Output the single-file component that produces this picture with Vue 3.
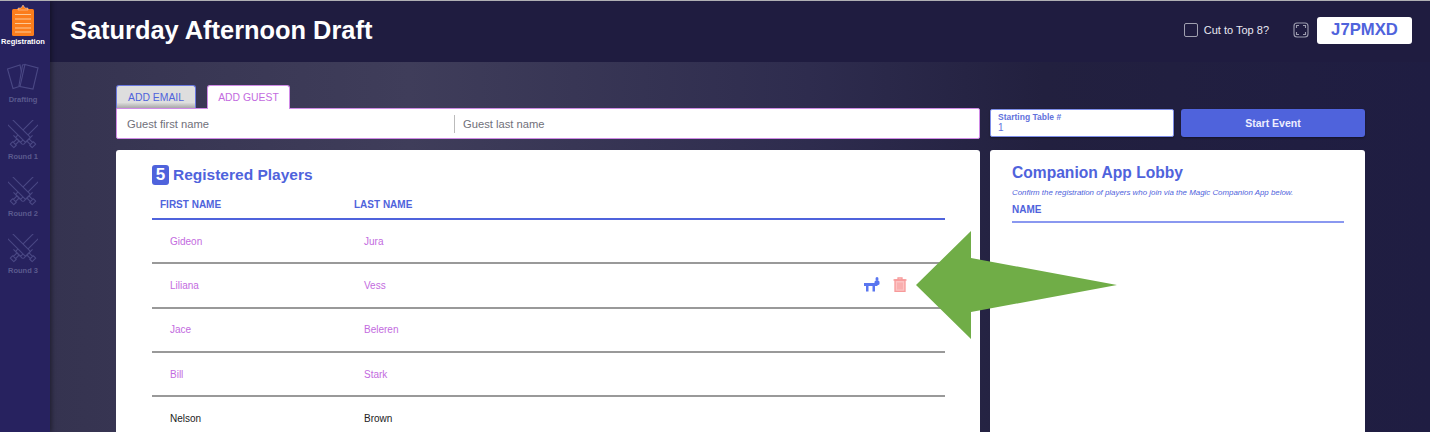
<script setup>
const rounds = ['Round 1', 'Round 2', 'Round 3']
const players = [
  { first: 'Gideon', last: 'Jura', guest: true },
  { first: 'Liliana', last: 'Vess', guest: true, actions: true },
  { first: 'Jace', last: 'Beleren', guest: true },
  { first: 'Bill', last: 'Stark', guest: true },
  { first: 'Nelson', last: 'Brown', guest: false }
]
</script>

<template>
  <div class="app">
    <nav class="rail">
      <div class="rail-item active">
        <svg class="clip" width="26" height="32" viewBox="0 0 26 32">
          <rect x="2" y="5" width="22" height="27" rx="1.500" fill="#fb7d1c" />
          <path d="M8 6V4h3l2-3 2 3h3v2z" fill="#fb7d1c" stroke="#fff" stroke-width=".4" />
          <path d="M5 10.500h16M5 15h16M5 19.500h16M5 24h16M5 28h16" stroke="#fdc996" stroke-width="1.200" />
        </svg>
        <span>Registration</span>
      </div>
      <div class="rail-item drafting">
        <svg width="32" height="30" viewBox="0 0 32 30" fill="#27225f" stroke="#4a4884" stroke-width="1.100">
          <path d="M.5 6L13 2l4 20-11 3.500z" />
          <path d="M15.500 2L18 1.500 14 23l-2-.5z" />
          <path d="M18 1.500L31 5l-5 21-13-2.500z" />
        </svg>
        <span>Drafting</span>
      </div>
      <div v-for="r in rounds" :key="r" class="rail-item round">
        <svg width="30" height="29" viewBox="-15 -15 30 29" fill="none" stroke="#4a4884" stroke-width="1.100" stroke-linejoin="round">
          <g transform="rotate(45) translate(0 -2)">
            <path d="M-3.500-18l1.500-1.500h3.500l2 1.500V9h-7z" />
            <path d="M-6.500 9h13M-1.500 9v5M1.500 9v5M-2.500 14h5v3.500h-5z" />
          </g>
          <g transform="rotate(-45) translate(0 -2)">
            <path d="M-3.500-18l1.500-1.500h3.500l2 1.500V9h-7z" fill="#27225f" />
            <path d="M-6.500 9h13M-1.500 9v5M1.500 9v5M-2.500 14h5v3.500h-5z" />
          </g>
        </svg>
        <span>{{ r }}</span>
      </div>
    </nav>

    <div class="page">
      <header class="top">
        <h1>Saturday Afternoon Draft</h1>
        <div class="top-tools">
          <label class="cut"><i class="check"></i><span>Cut to Top 8?</span></label>
          <svg class="full" width="16" height="16" viewBox="0 0 16 16" fill="none" stroke="#9c9cae" stroke-width="1.100">
            <rect x="1" y="1" width="14" height="14" rx="3" />
            <path d="M3.500 6V3.500H6M10 3.500h2.500V6M12.500 10v2.500H10M6 12.500H3.500V10" />
          </svg>
          <div class="code">J7PMXD</div>
        </div>
      </header>

      <main class="main">
        <div class="left">
          <div class="tabs">
            <div class="tab off">ADD EMAIL</div>
            <div class="tab on">ADD GUEST</div>
          </div>
          <div class="guest">
            <div class="field">Guest first name</div>
            <div class="field second">Guest last name</div>
          </div>
          <section class="card players">
            <h2><b class="count">5</b>Registered Players</h2>
            <div class="thead">
              <span>FIRST NAME</span>
              <span>LAST NAME</span>
            </div>
            <div v-for="p in players" :key="p.first" class="row" :class="{ guestrow: p.guest }">
              <span>{{ p.first }}</span>
              <span>{{ p.last }}</span>
              <div v-if="p.actions" class="actions">
                <svg width="16" height="15" viewBox="0 0 16 15" fill="#5a76f0">
                  <path d="M0 6h13.500v3H11v5.500H8.500V9h-4v5.500H2V9H0z" />
                  <ellipse cx="13" cy="2" rx="1.500" ry="2" />
                  <rect x="10.500" y="3.500" width="5" height="4.500" rx="1.500" />
                </svg>
                <svg width="14" height="15" viewBox="0 0 14 15">
                  <path d="M2 3h10v11.500H2z" fill="#fcc4c4" stroke="#f79a9a" stroke-width="1.300" />
                  <path d="M.5 3h13M5 3V1h4v2" fill="none" stroke="#f79a9a" stroke-width="1.300" />
                  <path d="M5 5.500v7M7 5.500v7M9 5.500v7" stroke="#f79a9a" stroke-width="1" />
                </svg>
              </div>
            </div>
          </section>
        </div>

        <div class="right">
          <div class="controls">
            <div class="table-no">
              <small>Starting Table #</small>
              <span>1</span>
            </div>
            <button class="start">Start Event</button>
          </div>
          <section class="card lobby">
            <h2>Companion App Lobby</h2>
            <p>Confirm the registration of players who join via the Magic Companion App below.</p>
            <div class="name">NAME</div>
          </section>
        </div>
      </main>
    </div>

    <svg class="arrow" width="202" height="109" viewBox="0 0 202 109">
      <path d="M0 54L55 0v27l146 27-146 27v27z" fill="#70ad47" />
    </svg>
  </div>
</template>

<style>
html, body { margin: 0; background: #1f1c40; }
</style>

<style scoped>
.app {
  position: relative;
  display: flex;
  width: 1430px;
  height: 432px;
  overflow: hidden;
  font-family: "Liberation Sans", Arial, sans-serif;
  border-top: 1px solid #b0b0b4;
  box-sizing: border-box;
}
.rail {
  flex: 0 0 50px;
  background: #27225f;
  box-shadow: 2px 0 4px rgba(0, 0, 0, .35);
  z-index: 1;
  display: flex;
  flex-direction: column;
  align-items: center;
  padding: 3px 4px 0 0;
  box-sizing: border-box;
}
.rail-item {
  display: flex;
  flex-direction: column;
  align-items: center;
  font-size: 7.500px;
  font-weight: 700;
  color: #5b5a8e;
  white-space: nowrap;
  line-height: 9px;
}
.rail-item.active { color: #fff; height: 59px; }
.clip { margin-bottom: 1px; }
.rail-item.drafting { height: 57px; }
.rail-item.round { height: 57px; }
.rail-item.round span { margin-top: 3px; }
.rail-item.drafting span { margin-top: 2px; }
.page { flex: 1; display: flex; flex-direction: column; min-width: 0; }
.top {
  flex: 0 0 61px;
  background: #1f1c40;
  display: flex;
  align-items: center;
  justify-content: space-between;
  padding: 0 18px 3px 20px;
  box-sizing: border-box;
}
h1 { margin: 0; font-size: 25.400px; color: #fff; font-weight: 700; }
.top-tools { display: flex; align-items: center; }
.cut { display: flex; align-items: center; gap: 6px; color: #e8e8f2; font-size: 11px; margin-right: 24px; }
.check { width: 12px; height: 12px; border: 1px solid #a0a0b0; border-radius: 2px; }
.full { margin-right: 8px; }
.code {
  width: 95px;
  height: 27px;
  background: #fff;
  border-radius: 3px;
  color: #4f63dc;
  font-size: 16.700px;
  font-weight: 700;
  display: flex;
  align-items: center;
  justify-content: center;
}
.main {
  flex: 1;
  display: flex;
  gap: 10px;
  padding: 23px 65px 0 66px;
  background: linear-gradient(90deg, #353350 0%, #3f3d5a 26%, #2e2c4e 55%, #22203f 72%, #1f1d42 100%);
}
.left { width: 864px; }
.tabs { display: flex; gap: 11px; height: 23px; }
.tab {
  box-sizing: border-box;
  height: 23px;
  padding-top: 6px;
  font-size: 10.400px;
  text-align: center;
  border-radius: 3px 3px 0 0;
}
.tab.off {
  width: 80px;
  background: linear-gradient(#dedede 75%, #a8a8a8);
  border: 1px solid #6a78e0;
  border-bottom: 0;
  color: #4f63dc;
}
.tab.on {
  width: 83px;
  background: #fff;
  border: 1px solid #cf8ae6;
  border-bottom: 0;
  color: #c36be0;
  position: relative;
  z-index: 1;
  height: 24px;
}
.guest {
  box-sizing: border-box;
  height: 31px;
  background: #fff;
  border: 1px solid #cf8ae6;
  border-radius: 0 2px 2px 2px;
  display: flex;
  align-items: center;
  color: #70707a;
  font-size: 11.200px;
}
.field { width: 327px; padding-left: 10px; }
.field.second { border-left: 1px solid #bbb; padding-left: 8px; line-height: 18px; }
.card {
  background: #fff;
  border-radius: 3px;
  height: 300px;
  box-sizing: border-box;
}
.players { margin-top: 11px; padding: 15px 35px 0 36px; }
.players h2 {
  margin: 0;
  display: flex;
  align-items: center;
  height: 20px;
  line-height: 22px;
  font-size: 15.500px;
  color: #4f63dc;
}
.count {
  width: 17px;
  height: 20px;
  background: #4f63dc;
  color: #fff;
  border-radius: 3px;
  text-align: center;
  line-height: 20px;
  font-size: 17px;
  margin-right: 4px;
}
.thead {
  display: grid;
  grid-template-columns: 194px 1fr;
  padding-left: 8px;
  height: 35px;
  line-height: 40px;
  box-sizing: border-box;
  border-bottom: 2px solid #4f63dc;
  font-size: 10px;
  font-weight: 700;
  color: #4f63dc;
}
.row {
  position: relative;
  display: grid;
  grid-template-columns: 194px 1fr;
  align-items: center;
  height: 44.300px;
  box-sizing: border-box;
  padding-left: 18px;
  border-bottom: 2px solid #999;
  font-size: 10px;
  color: #222;
}
.guestrow { color: #c36be0; }
.actions {
  position: absolute;
  left: 712px;
  top: 13px;
  display: flex;
  gap: 13px;
  align-items: center;
}
.right { width: 375px; }
.controls { display: flex; gap: 7px; padding-top: 24px; height: 28px; }
.table-no {
  box-sizing: border-box;
  width: 184px;
  height: 28px;
  background: #fff;
  border: 1px solid #7d8de8;
  border-radius: 2px;
  padding: 3px 7px;
  color: #6272dc;
  display: flex;
  flex-direction: column;
  box-shadow: 0 1px 2px rgba(0, 0, 0, .4);
}
.table-no small { font-size: 8.500px; line-height: 9px; font-weight: 700; }
.table-no span { font-size: 10px; line-height: 11px; }
.start {
  width: 184px;
  height: 28px;
  border: 0;
  border-radius: 3px;
  background: #4f63dc;
  color: #eef;
  font: 700 10.500px "Liberation Sans", Arial, sans-serif;
  box-shadow: 0 1px 2px rgba(0, 0, 0, .4);
}
.lobby { margin-top: 13px; padding: 14px 21px 0 22px; }
.lobby h2 { margin: 0; font-size: 15.600px; line-height: 18px; color: #4f63dc; }
.lobby p { margin: 6px 0 0; font-size: 7.900px; font-style: italic; color: #4f63dc; line-height: 9px; white-space: nowrap; }
.name {
  box-sizing: border-box;
  font-size: 10px;
  font-weight: 700;
  color: #4f63dc;
  height: 26px;
  padding-top: 4px;
  line-height: 18px;
  border-bottom: 2px solid #8a98f0;
}
.arrow { position: absolute; left: 916px; top: 230px; z-index: 2; }
</style>
